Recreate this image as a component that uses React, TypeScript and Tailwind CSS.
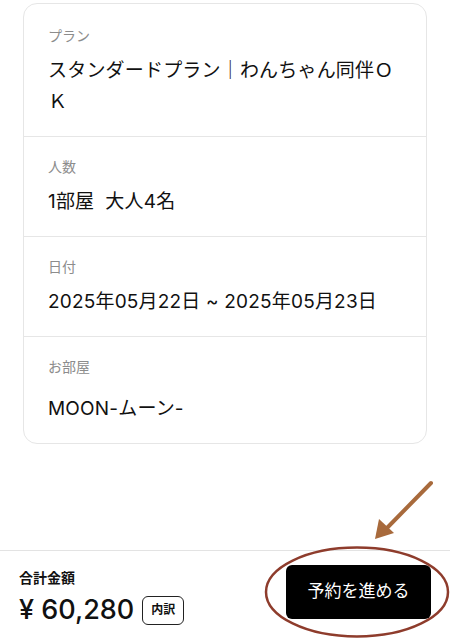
import React from "react";

const FONT = { fontFamily: 'Inter, "Noto Sans CJK JP", "Noto Sans", sans-serif' };

type Row = { label: string; value: string; room?: boolean };

const rows: Row[] = [
  { label: "プラン", value: "スタンダードプラン｜わんちゃん同伴ＯＫ" },
  { label: "人数", value: "1部屋  大人4名" },
  { label: "日付", value: "2025年05月22日 ~ 2025年05月23日" },
  { label: "お部屋", value: "MOON-ムーン-", room: true },
];

const SummaryRow: React.FC<{ row: Row; first: boolean }> = ({ row, first }) => (
  <div className={`px-6 pb-[19px] ${first ? "pt-[22px]" : "pt-5 border-t border-[#e6e6e6]"}`}>
    <div className="text-[14px] leading-5 text-[#8c8c8c]">{row.label}</div>
    <div className={`${row.room ? "mt-4" : "mt-[9px]"} text-[19px] leading-[31px] tracking-[0.01em] text-[#111] whitespace-pre-wrap`}>{row.value}</div>
  </div>
);

export default function App() {
  return (
    <div className="relative h-[641px] w-[450px] overflow-hidden bg-white flex flex-col" style={FONT}>
      {/* Reservation summary */}
      <div className="px-[23px] pt-[3px]">
        <div className="rounded-[14px] border border-[#e6e6e6] bg-white">
          {rows.map((r, i) => (
            <SummaryRow key={r.label} row={r} first={i === 0} />
          ))}
        </div>
      </div>

      <div className="flex-1" />

      {/* Bottom bar */}
      <div className="h-[91px] border-t border-[#e3e3e3] pl-[19px] pr-[19px] flex items-start justify-between">
        <div className="pt-[17px]">
          <div className="text-[14px] leading-5 font-bold text-[#111]">合計金額</div>
          <div className="mt-[2px] flex items-center gap-2">
            <span className="text-[27px] leading-[40px] font-medium text-[#111]">¥ 60,280</span>
            <span className="h-[29px] px-[8px] rounded-[6px] border-[1.5px] border-[#222] text-[12px] font-bold text-[#111] flex items-center">内訳</span>
          </div>
        </div>
        <button className="mt-[14px] h-[54px] w-[145px] rounded-md bg-black text-white text-[17px] flex items-center justify-center">
          予約を進める
        </button>
      </div>

      {/* Annotation: arrow + ellipse */}
      <svg className="absolute left-0 top-0 pointer-events-none" width="450" height="641" viewBox="0 0 450 641">
        <ellipse cx="357" cy="592" rx="91" ry="44.5" fill="none" stroke="#8e3c2c" strokeWidth="2.5" />
        <line x1="431" y1="483" x2="386" y2="529" stroke="#a86a3c" strokeWidth="4" strokeLinecap="round" />
        <polygon points="375,539 379,519 394,533" fill="#a86a3c" />
      </svg>
    </div>
  );
}
